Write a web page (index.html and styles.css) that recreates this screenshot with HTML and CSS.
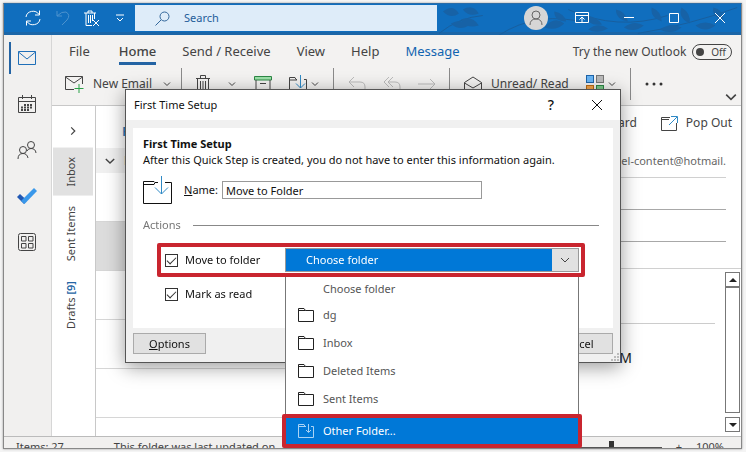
FILE: index.html
```html
<!DOCTYPE html>
<html lang="en">
<head>
  <meta charset="utf-8">
  <title>Inbox - Outlook</title>
  <link rel="stylesheet" href="styles.css">
</head>
<body>
  <!-- Shared icons -->
  <svg class="sprite" aria-hidden="true">
    <symbol id="chevron" viewBox="0 0 10 10"><path d="M2 3.5 L5 6.5 L8 3.5"/></symbol>
    <symbol id="folder" viewBox="0 0 16 14"><path d="M.5 13.5 V.5 H6 L7.5 2.5 H15.5 V13.5 Z M.5 2.5 H7.5"/></symbol>
    <symbol id="cross" viewBox="0 0 12 12"><path d="M1 1 L11 11 M11 1 L1 11"/></symbol>
  </svg>

  <div class="window">
    <!-- Title bar -->
    <header class="titlebar">
      <svg class="leaves" viewBox="0 0 304 32" preserveAspectRatio="xMidYMid slice" aria-hidden="true">
        <g class="branch">
          <path d="M0 30 Q20 14 44 12 M60 32 Q100 6 150 20 M130 6 Q180 28 230 12 M200 30 Q250 22 300 4"/>
        </g>
        <g class="leaf">
          <path d="M4 8 q10 -8 16 2 q-8 6 -16 -2 M12 20 q10 -6 18 2 q-10 6 -18 -2 M24 6 q10 -6 16 4 q-10 4 -16 -4 M22 16 q12 -4 18 6 q-12 4 -18 -6"/>
          <path d="M106 24 q10 -12 20 -4 q-8 8 -20 4 M116 8 q10 2 12 10 q-12 0 -12 -10 M146 12 q12 0 18 9 q-14 2 -18 -9 M150 26 q10 -8 20 -1 q-10 6 -20 1"/>
          <path d="M178 6 q10 2 12 12 q-12 -2 -12 -12 M186 24 q10 -8 20 -2 q-10 8 -20 2 M214 4 q10 4 10 14 q-12 -4 -10 -14 M222 26 q12 -8 22 -2 q-10 8 -22 2"/>
          <path d="M244 4 q10 6 8 16 q-12 -6 -8 -16 M258 22 q10 -6 20 0 q-10 8 -20 0 M276 4 q10 2 10 12 q-12 -2 -10 -12"/>
        </g>
      </svg>

      <div class="quick">
        <button type="button" aria-label="Send and receive">
          <svg width="18" height="16" viewBox="0 0 18 16"><path d="M2 7 A7 6.500 0 0 1 15 4.500 M16 9 A7 6.500 0 0 1 3 11.500 M15.500 .5 V5 H11 M2.500 15.500 V11 H7"/></svg>
        </button>
        <button type="button" class="faded" aria-label="Undo">
          <svg width="16" height="16" viewBox="0 0 16 16"><path d="M2 1 V6 H7 M2 6 Q7 1 11 2 Q16 5 12 10 L7 15"/></svg>
        </button>
        <button type="button" aria-label="Delete">
          <svg width="16" height="17" viewBox="0 0 16 17"><path d="M0 3 H12 M4 3 V1 H8 V3 M2 3 V15.500 H8 M10.500 3 V9 M4.500 5 V13 M6.500 5 V13 M8.500 5 V11 M9 10 L15 16 M15 10 L9 16"/></svg>
        </button>
        <button type="button" aria-label="Customize toolbar">
          <svg width="8" height="8" viewBox="0 0 8 8"><path d="M0 1 H8 M1 4 L4 7 L7 4"/></svg>
        </button>
      </div>

      <label class="search">
        <svg width="15" height="15" viewBox="0 0 15 15"><circle cx="9.500" cy="5.500" r="4.500"/><path d="M6 9 L.5 14.500"/></svg>
        <input type="text" placeholder="Search" aria-label="Search">
      </label>

      <div class="sys">
        <button type="button" class="avatar" aria-label="Account">
          <svg width="14" height="16" viewBox="0 0 14 16"><circle cx="7" cy="5" r="4"/><path d="M1 15 Q1 9 7 9 Q13 9 13 15"/></svg>
        </button>
        <button type="button" aria-label="Ribbon display options">
          <svg width="14" height="12" viewBox="0 0 14 12"><path d="M.5 .5 H13.500 V10.500 H.5 Z M.5 3.500 H13.500 M7 10 V5 M4.500 7.500 L7 5 L9.500 7.500"/></svg>
        </button>
        <button type="button" aria-label="Minimize">
          <svg width="10" height="12" viewBox="0 0 10 12"><path d="M0 5.500 H10"/></svg>
        </button>
        <button type="button" aria-label="Maximize">
          <svg width="10" height="10" viewBox="0 0 10 10"><path d="M.5 .5 H9.500 V9.500 H.5 Z"/></svg>
        </button>
        <button type="button" aria-label="Close">
          <svg width="12" height="12"><use href="#cross"/></svg>
        </button>
      </div>
    </header>

    <div class="shell">
      <!-- App rail -->
      <nav class="rail">
        <a href="#" class="current" aria-label="Mail">
          <svg width="18" height="14" viewBox="0 0 18 14"><path d="M.5 .5 H17.500 V13.500 H.5 Z M.5 1 L9 8 L17.500 1"/></svg>
        </a>
        <a href="#" aria-label="Calendar">
          <svg width="18" height="18" viewBox="0 0 18 18"><path d="M.5 2.500 H17.500 V17.500 H.5 Z M.5 6.500 H17.500 M4.500 0 V4 M13.500 0 V4"/><path class="dots" d="M6 10 H15 M3 12.500 H15 M3 15 H12"/></svg>
        </a>
        <a href="#" aria-label="People">
          <svg width="20" height="20" viewBox="0 0 20 20"><circle cx="14" cy="5" r="3.500"/><circle cx="6" cy="10" r="3.500"/><path d="M1 19 Q1 13.500 6 13.500 Q10 13.500 11 18 M10 11 Q11 8.500 14 8.500 Q18.500 8.500 19 13"/></svg>
        </a>
        <a href="#" aria-label="To Do">
          <svg class="todo" width="20" height="17" viewBox="0 0 20 17"><path class="todo-short" d="M0 9 L3 6 L10 12.500 L7 16 Z"/><path class="todo-long" d="M17 0 L20 3 L7.500 16 L4 13 Z"/></svg>
        </a>
        <a href="#" aria-label="More apps">
          <svg width="18" height="18" viewBox="0 0 18 18"><rect x=".5" y=".5" width="17" height="17" rx="2"/><path d="M3.500 3.500 H8 V8 H3.500 Z M10.500 3.500 H15 V8 H10.500 Z M3.500 10.500 H8 V15 H3.500 Z M10.500 10.500 H15 V15 H10.500 Z"/></svg>
        </a>
      </nav>

      <main class="main">
        <div class="ribbon">
          <div class="tabs">
            <a href="#">File</a>
            <a href="#" class="active">Home</a>
            <a href="#">Send / Receive</a>
            <a href="#">View</a>
            <a href="#">Help</a>
            <a href="#" class="message">Message</a>
            <div class="try">
              <span>Try the new Outlook</span>
              <button type="button" class="toggle" aria-label="Try the new Outlook"><i></i>Off</button>
            </div>
          </div>

          <div class="toolbar">
            <div class="group group-new">
              <button type="button">
                <svg width="19" height="17" viewBox="0 0 19 17"><path d="M9 13.500 H.5 V.5 H17.500 V8 M.5 1 L9 7 L17.500 1"/><path class="green" d="M14 8 V17 M9.500 12.500 H18.500"/></svg>
                New Email
              </button>
              <svg class="chev" width="10" height="10"><use href="#chevron"/></svg>
            </div>
            <div class="group group-edit">
              <button type="button" aria-label="Delete">
                <svg width="14" height="18" viewBox="0 0 14 18"><path d="M0 3.500 H14 M4.500 3 V.5 H9.500 V3 M1.500 3.500 V17.500 H12.500 V3.500 M4.500 6 V15 M7 6 V15 M9.500 6 V15"/></svg>
              </button>
              <svg class="chev" width="10" height="10"><use href="#chevron"/></svg>
              <button type="button" aria-label="Archive">
                <svg width="18" height="16" viewBox="0 0 18 16"><path class="lid" d="M.5 .5 H17.500 V4 H.5 Z"/><path d="M2 4 V15.500 H16 V4 M6 7.500 H12"/></svg>
              </button>
              <button type="button" aria-label="Move">
                <svg width="18" height="18" viewBox="0 0 18 18"><path d="M8 4.500 H7 L6 2.500 H.5 V17.500 H17.500 V4.500 H15 M.5 5 H8"/><path class="blue" d="M11.500 0 V13 M7 8.500 L11.500 13 L16 8.500"/></svg>
              </button>
              <svg class="chev near" width="10" height="10"><use href="#chevron"/></svg>
            </div>
            <div class="group group-reply">
              <button type="button" disabled aria-label="Reply">
                <svg width="18" height="16" viewBox="0 0 18 16"><path d="M6 1 L1 6 L6 11 M1 6 H12 Q17 6 17 11 V15"/></svg>
              </button>
              <button type="button" disabled aria-label="Reply all">
                <svg width="18" height="16" viewBox="0 0 18 16"><path d="M6 1 L1 6 L6 11 M10 1 L5 6 L10 11 M5 6 H12 Q17 6 17 11 V15"/></svg>
              </button>
              <button type="button" disabled aria-label="Forward mail">
                <svg width="18" height="12" viewBox="0 0 18 12"><path d="M0 6 H17 M12 1 L17 6 L12 11"/></svg>
              </button>
            </div>
            <div class="group group-read">
              <button type="button">
                <svg width="18" height="17" viewBox="0 0 18 17"><path d="M.5 6.500 L9 1 L17.500 6.500 V16.500 H.5 Z M.5 7 L9 12 L17.500 7"/></svg>
                Unread/ Read
              </button>
              <button type="button" aria-label="Categorize">
                <svg width="18" height="18" viewBox="0 0 18 18"><rect class="c1" x=".5" y=".5" width="7" height="7"/><rect class="c2" x="10.500" y=".5" width="7" height="7"/><rect class="c3" x=".5" y="10.500" width="7" height="7"/><rect class="c4" x="10.500" y="10.500" width="7" height="7"/></svg>
              </button>
              <svg class="chev near" width="10" height="10"><use href="#chevron"/></svg>
            </div>
            <button type="button" aria-label="More commands">
              <svg class="more" width="18" height="4" viewBox="0 0 18 4"><circle cx="2" cy="2" r="1.500"/><circle cx="9" cy="2" r="1.500"/><circle cx="16" cy="2" r="1.500"/></svg>
            </button>
            <button type="button" class="expand" aria-label="Expand ribbon">
              <svg width="16" height="16"><use href="#chevron"/></svg>
            </button>
          </div>
        </div>

        <div class="workspace">
          <!-- Collapsed folder pane -->
          <div class="folders">
            <button type="button" aria-label="Expand folder pane">
              <svg width="12" height="12"><use href="#chevron"/></svg>
            </button>
            <a href="#" class="selected">Inbox</a>
            <a href="#">Sent Items</a>
            <a href="#">Drafts <b>[9]</b></a>
          </div>

          <!-- Message list -->
          <div class="list">
            <div class="list-tabs"><a href="#">Focused</a></div>
            <div class="list-group">
              <svg width="14" height="14"><use href="#chevron"/></svg>
              <span>Date</span>
            </div>
            <div class="row"></div>
            <div class="row picked"></div>
            <div class="row"></div>
            <div class="row"></div>
            <div class="row"></div>
          </div>

          <!-- Reading pane -->
          <section class="reading">
            <div class="actions">
              <a href="#">Forward</a>
              <a href="#">
                <svg width="17" height="15" viewBox="0 0 17 15"><path d="M9 1.500 H.5 V14.500 H15.500 V7 M.5 3.500 H8"/><path class="blue" d="M8 9 L16 1 M10 .5 H16.500 V7"/></svg>
                Pop Out
              </a>
            </div>
            <div class="field to">el-content@hotmail.</div>
            <div class="field"></div>
            <div class="field"></div>
            <div class="gap"></div>
            <div class="body">
              <div class="text"><p>M</p></div>
              <div class="scroll">
                <button type="button" aria-label="Scroll up"><i class="up"></i></button>
                <div class="thumb"></div>
                <button type="button" aria-label="Scroll down"><i class="down"></i></button>
              </div>
            </div>
          </section>
        </div>
      </main>
    </div>

    <footer class="status">
      <span>Items: 27</span>
      <span>This folder was last updated on</span>
      <div class="zoom">
        <div class="track"><i></i></div>
        <span>+</span>
        <span>100%</span>
      </div>
    </footer>
  </div>

  <!-- First Time Setup dialog -->
  <div class="overlay">
    <form class="dialog" role="dialog" aria-labelledby="dialogTitle">
      <div class="dialog-title">
        <span id="dialogTitle">First Time Setup</span>
        <button type="button" class="help">?</button>
        <button type="button" aria-label="Close dialog"><svg width="12" height="12"><use href="#cross"/></svg></button>
      </div>
      <div class="dialog-body">
        <div class="panel">
          <h1>First Time Setup</h1>
          <p>After this Quick Step is created, you do not have to enter this information again.</p>
          <div class="name">
            <svg width="29" height="28" viewBox="0 0 29 28"><path d="M15 6.500 H12 L11 5.500 H.5 V27.500 H28.500 V6.500 H22 M.5 8.500 H11 L12 6.500"/><path class="blue" d="M18.500 0 V18 M12 11.500 L18.500 18 L25 11.500"/></svg>
            <label for="stepName"><u>N</u>ame:</label>
            <input type="text" id="stepName" value="Move to Folder">
          </div>
          <fieldset>
            <legend><span>Actions</span></legend>
            <div class="action marked">
              <input type="checkbox" id="move" checked>
              <label for="move">Move to folder</label>
              <div class="combo">
                <select aria-label="Folder">
                  <option>Choose folder</option>
                </select>
                <svg class="arrow" width="26" height="22" viewBox="0 0 26 22"><path d="M9 9 L13 13 L17 9"/></svg>
                <div class="menu">
                  <button type="button">Choose folder</button>
                  <button type="button"><svg width="16" height="14"><use href="#folder"/></svg>dg</button>
                  <button type="button"><svg width="16" height="14"><use href="#folder"/></svg>Inbox</button>
                  <button type="button"><svg width="16" height="14"><use href="#folder"/></svg>Deleted Items</button>
                  <button type="button"><svg width="16" height="14"><use href="#folder"/></svg>Sent Items</button>
                  <button type="button" class="other marked">
                    <svg width="16" height="14" viewBox="0 0 16 14"><path d="M8 2.500 H7 L6 .5 H.5 V13.500 H15.500 V2.500 H13 M.5 2.500 H7 M10.500 0 V8 M8 6 L10.500 8.500 L13 6"/></svg>Other Folder...
                  </button>
                </div>
              </div>
            </div>
            <div class="action">
              <input type="checkbox" id="read" checked>
              <label for="read">Mark as read</label>
            </div>
          </fieldset>
        </div>
        <div class="buttons">
          <button type="button"><u>O</u>ptions</button>
          <button type="button">Cancel</button>
        </div>
        <svg class="grip" width="8" height="8" viewBox="0 0 8 8"><path d="M6 0h2v2H6z M3 3h2v2H3z M6 3h2v2H6z M0 6h2v2H0z M3 6h2v2H3z M6 6h2v2H6z"/></svg>
      </div>
    </form>
  </div>
</body>
</html>
```
FILE: styles.css
```css
* {
  box-sizing: border-box;
}

body {
  margin: 0;
  background-color: #f4f4f4;
  font-family: "Noto Sans", "Open Sans", sans-serif;
  font-size: 12px;
  line-height: 16px;
  color: #444;
}

a {
  color: inherit;
  text-decoration: none;
}

button {
  display: flex;
  align-items: center;
  padding: 0;
  border: none;
  background: none;
  font: inherit;
  color: inherit;
}

svg {
  display: block;
  flex: none;
  fill: none;
  stroke: currentColor;
}

.sprite {
  position: absolute;
  width: 0;
  height: 0;
}

.blue {
  stroke: #2f8ac6;
}

.green {
  stroke: #2aa148;
}

.window {
  display: flex;
  flex-direction: column;
  height: calc(100vh - 6px);
  margin: 3px 4px 3px 3px;
  overflow: hidden;
  border: 1px solid #888;
  border-top-color: #2a6ca8;
  background-color: #fff;
  box-shadow: 0 0 2px #999;
}

/* Title bar */
.titlebar {
  position: relative;
  flex: none;
  display: flex;
  align-items: center;
  height: 31px;
  background-color: #106ebe;
  border-bottom: 3px solid #1b66a8;
  color: #fff;
}

.leaves {
  position: absolute;
  right: 0;
  top: 0;
  width: 41%;
  height: 31px;
}

.branch {
  stroke: #185f9e;
}

.leaf {
  fill: #1762a6;
  stroke: none;
}

.quick {
  display: flex;
  align-items: center;
  gap: 13px;
  width: 131px;
  padding-left: 20px;
}

.quick button:last-child {
  margin-left: 3px;
}

.faded {
  opacity: 0.25;
}

.search {
  display: flex;
  align-items: center;
  gap: 14px;
  width: 41%;
  height: 26px;
  padding-left: 20px;
  background-color: #deecf9;
  color: #33679b;
}

.search input {
  flex: 1;
  min-width: 0;
  padding: 0;
  border: none;
  background: none;
  font: inherit;
  font-size: 11px;
}

.search input::placeholder {
  color: #1f5c99;
  opacity: 1;
}

.sys {
  position: relative;
  display: flex;
  align-items: center;
  gap: 35px;
  margin-left: auto;
  padding-right: 15px;
}

.avatar {
  justify-content: center;
  width: 24px;
  height: 24px;
  margin-right: -8px;
  border-radius: 50%;
  background-color: #d6d6d6;
  color: #666;
}

/* App rail */
.shell {
  flex: 1;
  display: flex;
  min-height: 0;
}

.rail {
  flex: none;
  display: flex;
  flex-direction: column;
  gap: 14px;
  width: 48px;
  padding-top: 7px;
  border-right: 1px solid #d6d6d6;
  background-color: #f1f0ef;
}

.rail a {
  display: flex;
  align-items: center;
  justify-content: center;
  height: 32px;
  margin-left: 5px;
  padding-right: 9px;
  border-left: 2px solid transparent;
}

.rail .current {
  border-left-color: #2464a4;
  color: #1f6fb8;
}

.dots {
  stroke-width: 2;
  stroke-dasharray: 2 1;
}

.todo {
  stroke: none;
}

.todo-short {
  fill: #2158b4;
}

.todo-long {
  fill: #3a98ea;
}

.main {
  flex: 1;
  display: flex;
  flex-direction: column;
  min-width: 0;
}

/* Ribbon */
.ribbon {
  flex: none;
  background-color: #f3f2f1;
  border-bottom: 1px solid #c8c8c8;
}

.tabs {
  display: flex;
  align-items: center;
  gap: 26px;
  height: 33px;
  padding: 0 9px 0 17px;
  font-size: 13px;
}

.tabs > a {
  padding: 4px 0 3px;
  border-bottom: 3px solid transparent;
}

.tabs > .active {
  margin-left: 3px;
  border-bottom-color: #2464a4;
  font-weight: 500;
}

.tabs > .message {
  color: #1164b0;
}

.try {
  display: flex;
  align-items: center;
  gap: 6px;
  margin-left: auto;
  font-size: 12px;
}

.toggle {
  gap: 7px;
  height: 16px;
  padding: 0 5px 0 3px;
  border: 1px solid #444;
  border-radius: 8px;
  font-size: 10px;
}

.toggle i {
  width: 8px;
  height: 8px;
  border-radius: 50%;
  background-color: #444;
}

.toolbar {
  display: flex;
  align-items: flex-start;
  height: 37px;
  padding-left: 13px;
}

.toolbar button {
  gap: 9px;
  height: 32px;
}

.toolbar button:disabled {
  color: #bbb;
}

.group {
  display: flex;
  align-items: center;
  height: 32px;
  margin-right: 14px;
  padding-right: 13px;
  border-right: 1px solid #8a8a8a;
}

.group-new {
  gap: 10px;
  padding-right: 9px;
}

.group-edit,
.group-reply,
.group-read {
  gap: 17px;
}

.group .near {
  margin-left: -14px;
}

.lid {
  fill: #9be0a8;
  stroke: #2c8745;
}

.c1 {
  fill: #69b5f5;
  stroke: #1d64a8;
}

.c2 {
  fill: #bbb;
  stroke: #777;
}

.c3 {
  fill: #f5a54a;
  stroke: #b86a14;
}

.c4 {
  fill: #7cc98a;
  stroke: #2c8745;
}

.more {
  fill: #333;
  stroke: none;
}

.toolbar .expand {
  align-self: flex-end;
  height: 16px;
  margin: 0 2px 0 auto;
}

/* Collapsed folder pane */
.workspace {
  flex: 1;
  display: flex;
  min-height: 0;
}

.folders {
  flex: none;
  display: flex;
  flex-direction: column;
  width: 44px;
  padding: 7px 2px 0 1px;
  border-right: 1px solid #c8c8c8;
  font-size: 11px;
}

.folders button {
  justify-content: center;
  height: 35px;
}

.folders button svg {
  transform: rotate(-90deg);
}

.folders a {
  padding: 10px 10px;
  writing-mode: vertical-rl;
  transform: rotate(180deg);
}

.folders .selected {
  padding: 9px 10px;
  background-color: #e1e1e1;
}

.folders b {
  font-weight: 600;
  color: #2464a4;
}

/* Message list */
.list {
  flex: 1;
  min-width: 0;
}

.list-tabs {
  height: 42px;
  padding: 17px 0 0 26px;
  font-size: 13px;
  font-weight: 600;
  color: #2b7ab8;
}

.list-group {
  display: flex;
  align-items: center;
  gap: 7px;
  height: 25px;
  padding-left: 7px;
  background-color: #f0f0f0;
}

.row {
  height: 49px;
  border-bottom: 1px solid #d6d6d6;
}

.picked {
  background-color: #dcdcdc;
}

/* Reading pane */
.reading {
  flex: none;
  display: flex;
  flex-direction: column;
  width: 30%;
}

.actions {
  display: flex;
  justify-content: flex-end;
  gap: 24px;
  padding: 9px 9px 17px 0;
}

.actions a {
  display: flex;
  align-items: center;
  gap: 8px;
}

.field {
  height: 32px;
  margin-right: 15px;
  border-bottom: 1px solid #a8a8a8;
  text-align: right;
}

.to {
  height: 30px;
  padding-top: 5px;
  border-bottom-color: #d0d0d0;
  font-size: 11px;
  color: #666;
}

.gap {
  height: 27px;
  border-bottom: 1px solid #d0d0d0;
}

.body {
  flex: 1;
  display: flex;
  min-height: 0;
}

.text {
  flex: 1;
  margin-right: 10px;
}

.text p {
  margin: 54px 0 0;
  padding: 26px 83px 0 0;
  border-top: 1px solid #ccc;
  font-size: 14px;
  text-align: right;
  color: #222;
}

.scroll {
  display: flex;
  flex-direction: column;
  width: 15px;
  margin: 3px 1px 4px 0;
}

.scroll button {
  justify-content: center;
  height: 15px;
  border: 1px solid #777;
}

.scroll i {
  border: 4px solid transparent;
}

.scroll .up {
  border-top: none;
  border-bottom-color: #222;
}

.scroll .down {
  border-bottom: none;
  border-top-color: #222;
}

.thumb {
  flex: 1;
  margin-bottom: 4px;
  border: 1px solid #777;
}

/* Status bar */
.status {
  flex: none;
  display: flex;
  gap: 50px;
  height: 12px;
  padding: 2px 17px 0 12px;
  overflow: hidden;
  border-top: 1px solid #bbb;
  background-color: #f1f0ef;
  font-size: 11px;
}

.zoom {
  display: flex;
  gap: 14px;
  margin-left: auto;
}

.track {
  display: flex;
  justify-content: center;
  width: 100px;
  height: 9px;
  padding-top: 2px;
  border-bottom: 1px solid #555;
}

.track i {
  width: 5px;
  background-color: #333;
}

/* Dialog */
.overlay {
  position: fixed;
  inset: 0;
  display: flex;
  align-items: center;
  justify-content: center;
}

.dialog {
  width: 496px;
  max-width: 95%;
  border: 1px solid #555;
  background-color: #f0f0f0;
  box-shadow: 0 4px 18px rgba(0, 0, 0, 0.4);
  font-size: 11px;
  color: #111;
}

.dialog-title {
  display: flex;
  align-items: center;
  gap: 37px;
  height: 30px;
  padding: 0 17px 0 8px;
  background-color: #fff;
}

.help {
  margin-left: auto;
  font-size: 14px;
  font-weight: 500;
}

.dialog-body {
  position: relative;
  padding: 8px 7px;
}

.panel {
  padding: 8px 14px 17px 10px;
  background-color: #fff;
}

.panel h1 {
  margin: 0;
  font-size: 11px;
}

.panel p {
  margin: 0;
}

.name {
  display: flex;
  align-items: center;
  gap: 4px;
  margin-top: 8px;
}

.name svg {
  margin-right: 8px;
}

.name input {
  flex: 0 1 260px;
  height: 18px;
  padding: 0 3px;
  border: 1px solid #999;
  font: inherit;
  color: inherit;
}

.panel fieldset {
  min-width: 0;
  margin: 0;
  padding: 0;
  border: none;
}

.panel legend {
  display: flex;
  align-items: center;
  gap: 12px;
  width: 100%;
  padding: 13px 0 10px;
  color: #777;
}

.panel legend::after {
  content: "";
  flex: 1;
  border-top: 1px solid #888;
}

.action {
  display: flex;
  align-items: center;
  height: 34px;
  margin: 0 14px;
  border: 0 solid transparent;
  border-width: 0 4px;
}

.action.marked {
  border: 4px solid #c9252f;
  border-radius: 2px;
}

.action input {
  appearance: none;
  width: 13px;
  height: 13px;
  margin: 0 7px 0 4px;
  border: 1px solid #333;
  background-color: #fff;
}

.action input:checked::before {
  content: "";
  display: block;
  width: 8px;
  height: 4px;
  margin: 2px 1px;
  border: solid #333;
  border-width: 0 0 1px 1px;
  transform: rotate(-45deg);
}

.combo {
  position: relative;
  display: flex;
  width: 294px;
  height: 24px;
  margin: 0 2px 0 auto;
  border: 1px solid #999;
}

.combo select {
  appearance: none;
  flex: 1;
  padding: 0 20px;
  border: none;
  border-radius: 0;
  background-color: #0078d7;
  font: inherit;
  color: #fff;
}

.arrow {
  background-color: #e1e1e1;
  color: #444;
  pointer-events: none;
}

.menu {
  position: absolute;
  top: 28px;
  left: -1px;
  right: -1px;
  border: 1px solid #777;
  border-width: 0 1px;
  background-color: #fff;
}

.menu button {
  gap: 9px;
  width: 100%;
  height: 28px;
  padding-left: 12px;
  color: #555;
}

.menu button:first-child {
  height: 24px;
  padding-left: 37px;
}

.menu svg {
  color: #222;
}

.menu .other {
  width: calc(100% + 8px);
  height: 34px;
  margin: 1px -4px 0;
  border: 4px solid #c9252f;
  border-radius: 2px;
  background-color: #0078d7;
  color: #fff;
}

.menu .other svg {
  color: #a9d3f5;
}

.buttons {
  display: flex;
  justify-content: space-between;
  margin-top: 5px;
}

.buttons button {
  justify-content: center;
  width: 73px;
  height: 21px;
  border: 1px solid #aaa;
  background-color: #e1e1e1;
}

.grip {
  position: absolute;
  right: 1px;
  bottom: 1px;
  fill: #bbb;
  stroke: none;
}
```
